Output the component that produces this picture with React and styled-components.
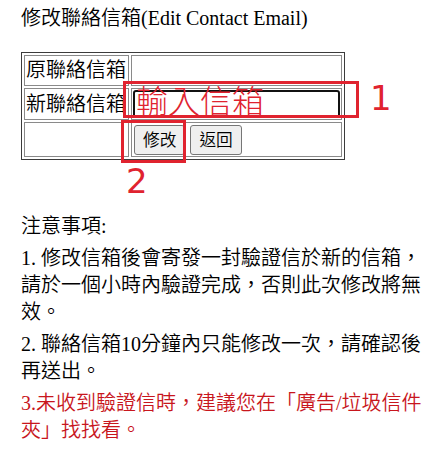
import React from 'react'
import styled, { createGlobalStyle } from 'styled-components'

const GlobalStyle = createGlobalStyle`
    body {
        margin: 0;
        background: #fff;
        color: #000;
        font-family: "Liberation Serif", "Noto Sans CJK TC", serif;
        font-size: 20px;
        font-weight: 350;
    }
`

const Page = styled.div`
    padding: 5px 21px 0;
`

const Title = styled.div`
    line-height: 27px;
    margin-bottom: 20px;
`

const FormArea = styled.div`
    position: relative;
    display: inline-block;
    vertical-align: top;
`

const FormTable = styled.table`
    border-collapse: separate;
    border-spacing: 2px;
    border: 1px solid #3c3c3c;
`

const Row = styled.tr`
    height: ${props => props.h}px;
`

const Cell = styled.td`
    border: 1px solid #8a8a8a;
    padding: 1px;
    vertical-align: middle;
    line-height: 27px;
    width: ${props => props.w ? `${props.w}px` : 'auto'};
    white-space: nowrap;
`

const EmailInput = styled.input`
    display: block;
    box-sizing: border-box;
    width: 207px;
    height: 28px;
    margin: 0;
    border: 2px solid #111;
    border-radius: 3px;
    background: #fff;
    outline: none;
`

const ButtonRow = styled.div`
    display: flex;
    gap: 5px;
    padding-left: 1px;
`

const Button = styled.button`
    height: 30px;
    padding: 0 8px;
    font-family: "Noto Sans CJK TC", sans-serif;
    font-size: 16.7px;
    font-weight: 350;
    line-height: 1;
    color: #000;
    background: #efefef;
    border: 1px solid #767676;
    border-radius: 3px;
`

// red markup boxes drawn over the form
const MarkBox = styled.div`
    position: absolute;
    left: ${props => props.x}px;
    top: ${props => props.y}px;
    width: ${props => props.w}px;
    height: ${props => props.h}px;
    box-sizing: border-box;
    border: 3px solid #e0232f;
    pointer-events: none;
`

const MarkText = styled.div`
    position: absolute;
    left: 115px;
    top: 31px;
    font-family: "Noto Sans CJK TC", sans-serif;
    font-weight: 300;
    font-size: 32px;
    line-height: 1;
    color: #e0232f;
    white-space: nowrap;
    pointer-events: none;
`

const MarkNumber = styled.div`
    position: absolute;
    left: ${props => props.x}px;
    top: ${props => props.y}px;
    font-family: "DejaVu Sans", sans-serif;
    font-size: 34px;
    font-weight: 400;
    line-height: 1;
    color: #e0232f;
`

const Notes = styled.div`
    margin-top: 53px;
    width: 406px;
`

const Note = styled.p`
    margin: 0 0 5px;
    line-height: 27px;
    color: ${props => props.warn ? '#c8161d' : '#000'};
`

const App = () => {
    return (
        <>
            <GlobalStyle />
            <Page>
                <Title>修改聯絡信箱(Edit Contact Email)</Title>
                <FormArea>
                    <FormTable>
                        <tbody>
                            <Row h={31}>
                                <Cell w={101}>原聯絡信箱</Cell>
                                <Cell w={207}></Cell>
                            </Row>
                            <Row h={31}>
                                <Cell>新聯絡信箱</Cell>
                                <Cell>
                                    <EmailInput type='text' />
                                </Cell>
                            </Row>
                            <Row h={35}>
                                <Cell></Cell>
                                <Cell>
                                    <ButtonRow>
                                        <Button>修改</Button>
                                        <Button>返回</Button>
                                    </ButtonRow>
                                </Cell>
                            </Row>
                        </tbody>
                    </FormTable>
                    <MarkBox x={102} y={29} w={236} h={37} />
                    <MarkText>輸入信箱</MarkText>
                    <MarkNumber x={349} y={29}>1</MarkNumber>
                    <MarkBox x={100} y={68} w={65} h={43} />
                    <MarkNumber x={105} y={112}>2</MarkNumber>
                </FormArea>
                <Notes>
                    <Note>注意事項:</Note>
                    <Note>1. 修改信箱後會寄發一封驗證信於新的信箱，請於一個小時內驗證完成，否則此次修改將無效。</Note>
                    <Note>2. 聯絡信箱10分鐘內只能修改一次，請確認後再送出。</Note>
                    <Note warn>3.未收到驗證信時，建議您在「廣告/垃圾信件夾」找找看。</Note>
                </Notes>
            </Page>
        </>
    )
}

export default App
